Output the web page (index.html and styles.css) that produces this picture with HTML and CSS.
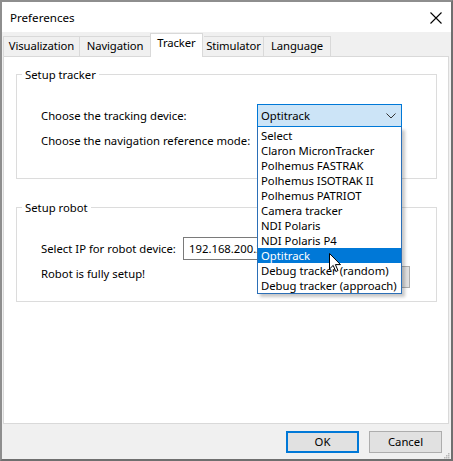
FILE: index.html
```html
<!DOCTYPE html>
<html lang="en">
<head>
<meta charset="utf-8">
<title>Preferences</title>
<link rel="stylesheet" href="styles.css">
</head>
<body>
<div class="window">
  <div class="titlebar">
    <span class="title">Preferences</span>
    <svg class="close" width="12" height="12" viewBox="0 0 12 12"><path d="M0.5 0.5 L11.5 11.5 M11.5 0.5 L0.5 11.5" stroke="#000" stroke-width="1.1" fill="none"/></svg>
  </div>
  <div class="tabstrip">
    <div class="tab tab-vis">Visualization</div>
    <div class="tab tab-nav">Navigation</div>
    <div class="tab tab-active">Tracker</div>
    <div class="tab tab-stim">Stimulator</div>
    <div class="tab tab-lang">Language</div>
  </div>
  <div class="panel">
    <div class="group group-tracker">
      <span class="group-title">Setup tracker</span>
      <div class="tracker-grid">
        <span class="label">Choose the tracking device:</span>
        <div class="combo-wrap">
          <div class="combo combo-open">
            <span>Optitrack</span>
            <svg class="chevron" width="10" height="6" viewBox="0 0 10 6"><path d="M0.5 0.5 L5 5 L9.5 0.5" stroke="#333" stroke-width="1" fill="none"/></svg>
          </div>
          <ul class="dropdown">
            <li>Select</li>
            <li>Claron MicronTracker</li>
            <li>Polhemus FASTRAK</li>
            <li>Polhemus ISOTRAK II</li>
            <li>Polhemus PATRIOT</li>
            <li>Camera tracker</li>
            <li>NDI Polaris</li>
            <li>NDI Polaris P4</li>
            <li class="selected">Optitrack</li>
            <li>Debug tracker (random)</li>
            <li>Debug tracker (approach)</li>
          </ul>
          <svg class="cursor" width="13" height="20" viewBox="0 0 13 20"><path d="M0.5 0.5 L0.5 16 L4.2 12.4 L6.8 18.5 L9 17.6 L6.4 11.6 L11.5 11.6 Z" fill="#fff" stroke="#000" stroke-width="1" stroke-linejoin="round"/></svg>
        </div>
        <span class="label">Choose the navigation reference mode:</span>
        <div class="combo"></div>
      </div>
    </div>
    <div class="group group-robot">
      <span class="group-title">Setup robot</span>
      <div class="robot-row">
        <span class="label label-ip">Select IP for robot device:</span>
        <div class="textbox">192.168.200.2</div>
      </div>
      <div class="robot-row robot-row-status">
        <span class="label">Robot is fully setup!</span>
        <div class="btn btn-connect"></div>
      </div>
    </div>
  </div>
  <div class="footer">
    <div class="btn btn-default">OK</div>
    <div class="btn">Cancel</div>
    <svg class="grip" width="7" height="7" viewBox="0 0 7 7" fill="#b8b8b8">
      <rect x="5" y="1" width="1.5" height="1.5"/>
      <rect x="3" y="3" width="1.5" height="1.5"/><rect x="5" y="3" width="1.5" height="1.5"/>
      <rect x="1" y="5" width="1.5" height="1.5"/><rect x="3" y="5" width="1.5" height="1.5"/><rect x="5" y="5" width="1.5" height="1.5"/>
    </svg>
  </div>
</div>
</body>
</html>
```
FILE: styles.css
```css
* { box-sizing: border-box; }
html, body { margin: 0; padding: 0; background: #fff; }
body {
  font-family: "Noto Sans", "Open Sans", sans-serif;
  font-size: 11.3px;
  color: #000;
}
.window {
  width: 453px;
  height: 461px;
  border: 2px solid #8e8e8e;
  border-right-color: #6f6f6f;
  border-bottom-color: #6f6f6f;
  background: #f0f0f0;
  display: flex;
  flex-direction: column;
}
.titlebar {
  height: 30px;
  background: #fff;
  display: flex;
  align-items: center;
  justify-content: space-between;
  padding: 0 9px 0 8px;
  flex: none;
}
.title { font-size: 11.6px; line-height: 15px; }
.close { display: block; margin-top: 1px; }
.tabstrip {
  height: 25px;
  flex: none;
  display: flex;
  align-items: flex-end;
  padding: 1px 0 0 1px;
}
.tab {
  height: 20px;
  margin-bottom: 1px;
  border: 1px solid #d9d9d9;
  border-bottom: none;
  border-left: none;
  background: #f0f0f0;
  line-height: 18px;
  padding: 0;
  text-align: center;
  white-space: nowrap;
  letter-spacing: -0.1px;
}
.tab-vis { border-left: 1px solid #d9d9d9; width: 77px; }
.tab-nav { width: 71px; }
.tab-stim { width: 60px; margin-left: 1px; }
.tab-lang { width: 67px; }
.tab-active {
  position: relative;
  z-index: 2;
  height: 24px;
  margin-bottom: 0;
  width: 53px;
  margin-left: -1px;
  background: #fff;
  border: 1px solid #d9d9d9;
  border-bottom: none;
  line-height: 18px;
}
.panel {
  height: 368px;
  flex: none;
  margin: -1px 2px 0 1px;
  background: #fff;
  border: 1px solid #d9d9d9;
  padding-top: 17px;
}
.group {
  position: relative;
  margin: 0 11px 0 12px;
  border: 1px solid #dcdcdc;
  padding: 29px 26px 0 24px;
}
.group-tracker { height: 105px; }
.group-robot { height: 95px; margin-top: 28px; }
.group-title {
  position: absolute;
  top: -8px;
  left: 5px;
  padding: 0 3px;
  background: #fff;
  line-height: 15px;
}
.tracker-grid {
  display: grid;
  grid-template-columns: 216px 145px;
  grid-template-rows: 23px 23px;
  row-gap: 2px;
  align-items: center;
}
.label { line-height: 15px; white-space: nowrap; }
.combo-wrap { position: relative; height: 23px; }
.combo {
  height: 23px;
  border: 1px solid #adadad;
  background: #e5e5e5;
  display: flex;
  align-items: center;
  justify-content: space-between;
  padding: 0 5px 0 3px;
  line-height: 15px;
}
.combo-open {
  border-color: #0078d7;
  background: #cce4f7;
}
.chevron { display: block; }
.dropdown {
  position: absolute;
  z-index: 10;
  top: 23px;
  left: 0;
  width: 145px;
  margin: 0;
  padding: 0;
  list-style: none;
  background: #fff;
  border: 1px solid #2b6fb7;
  border-top: none;
  box-shadow: 3px 3px 3px rgba(0, 0, 0, 0.22);
}
.dropdown li {
  height: 15px;
  line-height: 15px;
  padding-left: 3px;
  white-space: nowrap;
}
.dropdown li:first-child { margin-top: 1px; }
.dropdown .selected { background: #0078d7; color: #fff; }
.cursor {
  position: absolute;
  z-index: 11;
  left: 72px;
  top: 149px;
  display: block;
}
.robot-row { display: flex; align-items: center; height: 23px; }
.label-ip { width: 142px; }
.textbox {
  width: 140px;
  height: 23px;
  border: 1px solid #7a7a7a;
  background: #fff;
  line-height: 21px;
  padding-left: 5px;
}
.robot-row-status {
  height: 22px;
  margin-top: 6px;
  align-items: flex-start;
  justify-content: space-between;
}
.btn {
  width: 73px;
  height: 22px;
  border: 1px solid #adadad;
  background: #e1e1e1;
  line-height: 20px;
  text-align: center;
}
.btn-connect { width: 75px; }
.footer {
  position: relative;
  flex: 1;
  display: flex;
  justify-content: flex-end;
  align-items: flex-start;
  gap: 10px;
  padding: 7px 9px 0 0;
}
.btn-default { border: 2px solid #0078d7; line-height: 18px; }
.grip { position: absolute; right: 1px; bottom: 0; display: block; }
```
